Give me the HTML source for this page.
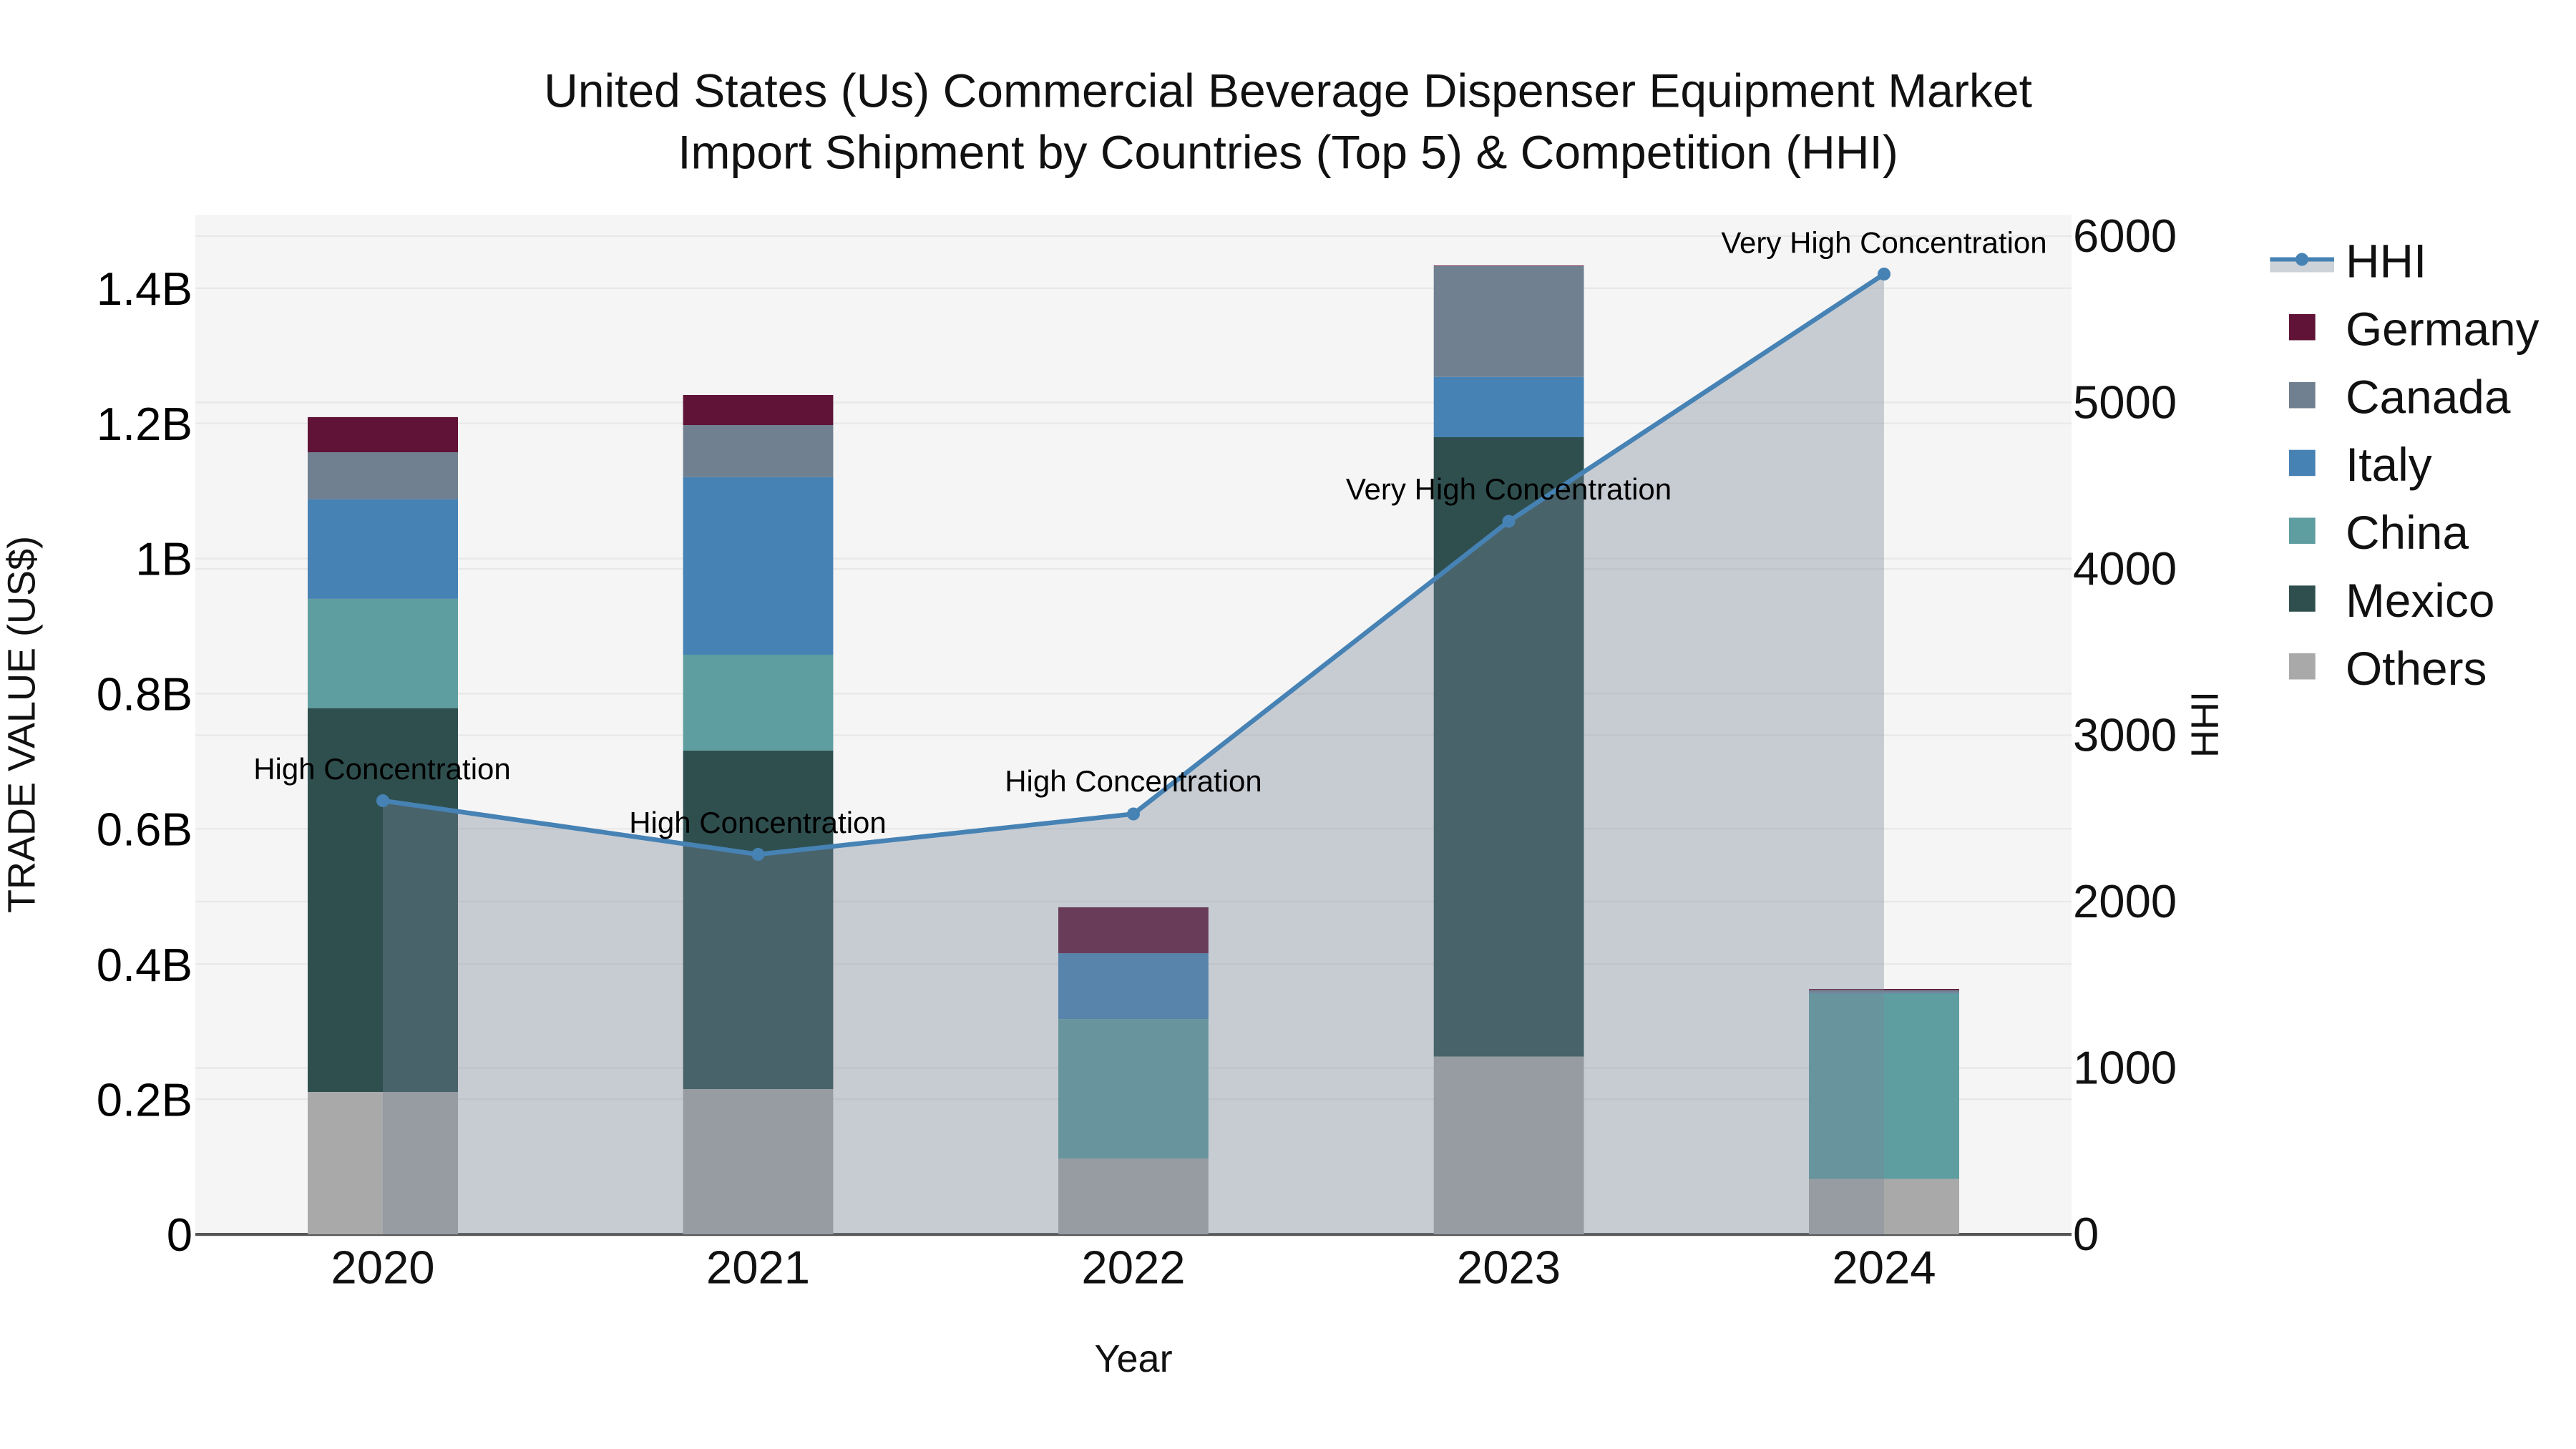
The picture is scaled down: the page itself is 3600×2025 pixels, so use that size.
<!DOCTYPE html>
<html lang="en">
<head>
<meta charset="utf-8">
<title>United States (Us) Commercial Beverage Dispenser Equipment Market</title>
<style>
html,body{margin:0;padding:0;background:#fff;width:3600px;height:2025px;overflow:hidden}
svg{display:block}
text{font-family:"Liberation Sans",Arial,sans-serif;fill:#111}
.title{font-size:66px;text-anchor:middle}
.tl{font-size:65.25px;text-anchor:end;fill:#000}
.tr{font-size:65.25px}
.tx{font-size:65.25px;text-anchor:middle}
.at{font-size:54px;text-anchor:middle}
.an{font-size:42px;text-anchor:middle;fill:#000}
.lg{font-size:65.8px}
</style>
</head>
<body>
<svg xmlns="http://www.w3.org/2000/svg" width="3600" height="2025" viewBox="0 0 3600 2025">
<rect width="3600" height="2025" fill="#fff"/>
<rect x="273" y="300" width="2622" height="1425" fill="#f5f5f5"/>

<!-- gridlines -->
<g stroke="#e8e8e8" stroke-width="2.25">
<path d="M273 1536.1H2895M273 1347.2H2895M273 1158.3H2895M273 969.4H2895M273 780.6H2895M273 591.7H2895M273 402.8H2895"/>
<path d="M273 1492.5H2895M273 1260H2895M273 1027.5H2895M273 795H2895M273 562.5H2895M273 330H2895"/>
</g>
<rect x="273" y="1723" width="2622" height="4.2" fill="#555"/>

<!-- bars 2020 -->
<rect x="430" y="1526" width="210" height="199" fill="#a9a9a9"/>
<rect x="430" y="989.6" width="210" height="536.4" fill="#2f4f4f"/>
<rect x="430" y="836.9" width="210" height="152.7" fill="#5f9ea0"/>
<rect x="430" y="697.6" width="210" height="139.3" fill="#4682b4"/>
<rect x="430" y="632" width="210" height="65.6" fill="#708090"/>
<rect x="430" y="582.9" width="210" height="49.1" fill="#601336"/>
<!-- bars 2021 -->
<rect x="954.6" y="1522" width="209.8" height="203" fill="#a9a9a9"/>
<rect x="954.6" y="1048.9" width="209.8" height="473.1" fill="#2f4f4f"/>
<rect x="954.6" y="915" width="209.8" height="133.9" fill="#5f9ea0"/>
<rect x="954.6" y="666.8" width="209.8" height="248.2" fill="#4682b4"/>
<rect x="954.6" y="594" width="209.8" height="72.8" fill="#708090"/>
<rect x="954.6" y="552" width="209.8" height="42" fill="#601336"/>
<!-- bars 2022 -->
<rect x="1479" y="1619.2" width="209.8" height="105.8" fill="#a9a9a9"/>
<rect x="1479" y="1424.1" width="209.8" height="195.1" fill="#5f9ea0"/>
<rect x="1479" y="1332.1" width="209.8" height="92" fill="#4682b4"/>
<rect x="1479" y="1267.9" width="209.8" height="64.2" fill="#601336"/>
<!-- bars 2023 -->
<rect x="2003.7" y="1476.5" width="209.8" height="248.5" fill="#a9a9a9"/>
<rect x="2003.7" y="611" width="209.8" height="865.5" fill="#2f4f4f"/>
<rect x="2003.7" y="526.8" width="209.8" height="84.2" fill="#4682b4"/>
<rect x="2003.7" y="371.8" width="209.8" height="155" fill="#708090"/>
<rect x="2003.7" y="371" width="209.8" height="0.9" fill="#601336"/>
<!-- bars 2024 -->
<rect x="2528" y="1647.5" width="210" height="77.5" fill="#a9a9a9"/>
<rect x="2528" y="1388.6" width="210" height="258.9" fill="#5f9ea0"/>
<rect x="2528" y="1387.8" width="210" height="0.8" fill="#4682b4"/>
<rect x="2528" y="1383.6" width="210" height="4.2" fill="#708090"/>
<rect x="2528" y="1382" width="210" height="1.6" fill="#601336"/>

<!-- HHI area + line -->
<path d="M535 1119L1059.5 1194L1584 1137.5L2108.5 728.6L2633 383V1725H535Z" fill="rgb(121,135,153)" fill-opacity="0.365"/>
<path d="M535 1119L1059.5 1194L1584 1137.5L2108.5 728.6L2633 383" fill="none" stroke="#4682b4" stroke-width="6.5" stroke-linejoin="round"/>
<g fill="#4682b4">
<circle cx="535" cy="1119" r="9"/>
<circle cx="1059.5" cy="1194" r="9"/>
<circle cx="1584" cy="1137.5" r="9"/>
<circle cx="2108.5" cy="728.6" r="9"/>
<circle cx="2633" cy="383" r="9"/>
</g>

<!-- annotations -->
<text class="an" x="534" y="1089">High Concentration</text>
<text class="an" x="1059" y="1164">High Concentration</text>
<text class="an" x="1584" y="1105.8">High Concentration</text>
<text class="an" x="2108.5" y="698">Very High Concentration</text>
<text class="an" x="2633" y="353.6">Very High Concentration</text>

<!-- title -->
<text class="title" x="1800" y="149.5">United States (Us) Commercial Beverage Dispenser Equipment Market</text>
<text class="title" x="1800" y="235.7">Import Shipment by Countries (Top 5) &amp; Competition (HHI)</text>

<!-- left ticks -->
<text class="tl" x="269" y="426">1.4B</text>
<text class="tl" x="269" y="615">1.2B</text>
<text class="tl" x="269" y="803.6">1B</text>
<text class="tl" x="269" y="992.6">0.8B</text>
<text class="tl" x="269" y="1181.6">0.6B</text>
<text class="tl" x="269" y="1371">0.4B</text>
<text class="tl" x="269" y="1559.5">0.2B</text>
<text class="tl" x="269" y="1748">0</text>

<!-- right ticks -->
<text class="tr" x="2897" y="352">6000</text>
<text class="tr" x="2897" y="584.5">5000</text>
<text class="tr" x="2897" y="817">4000</text>
<text class="tr" x="2897" y="1049.5">3000</text>
<text class="tr" x="2897" y="1282">2000</text>
<text class="tr" x="2897" y="1514.5">1000</text>
<text class="tr" x="2897" y="1747">0</text>

<!-- x ticks -->
<text class="tx" x="535" y="1793.6">2020</text>
<text class="tx" x="1059.5" y="1793.6">2021</text>
<text class="tx" x="1584" y="1793.6">2022</text>
<text class="tx" x="2108.5" y="1793.6">2023</text>
<text class="tx" x="2633" y="1793.6">2024</text>

<!-- axis titles -->
<text class="at" x="1584" y="1917">Year</text>
<text class="at" transform="translate(48.5 1012.5) rotate(-90)">TRADE VALUE (US$)</text>
<text class="at" transform="translate(3099.5 1012.5) rotate(-90)">HHI</text>

<!-- legend -->
<rect x="3172.4" y="362.5" width="89.6" height="18" fill="#cdd2d9"/>
<rect x="3172.4" y="359.5" width="89.6" height="6" fill="#4682b4"/>
<circle cx="3217" cy="362.5" r="9" fill="#4682b4"/>
<rect x="3199" y="439" width="36.7" height="36.5" fill="#601336"/>
<rect x="3199" y="534" width="36.7" height="36.5" fill="#708090"/>
<rect x="3199" y="628.7" width="36.7" height="36.5" fill="#4682b4"/>
<rect x="3199" y="723.5" width="36.7" height="36.5" fill="#5f9ea0"/>
<rect x="3199" y="818.3" width="36.7" height="36.5" fill="#2f4f4f"/>
<rect x="3199" y="913" width="36.7" height="36.5" fill="#a9a9a9"/>
<text class="lg" x="3278" y="387.5">HHI</text>
<text class="lg" x="3278" y="482.4">Germany</text>
<text class="lg" x="3278" y="577.3">Canada</text>
<text class="lg" x="3278" y="672.2">Italy</text>
<text class="lg" x="3278" y="767">China</text>
<text class="lg" x="3278" y="861.9">Mexico</text>
<text class="lg" x="3278" y="956.8">Others</text>
</svg>
</body>
</html>
